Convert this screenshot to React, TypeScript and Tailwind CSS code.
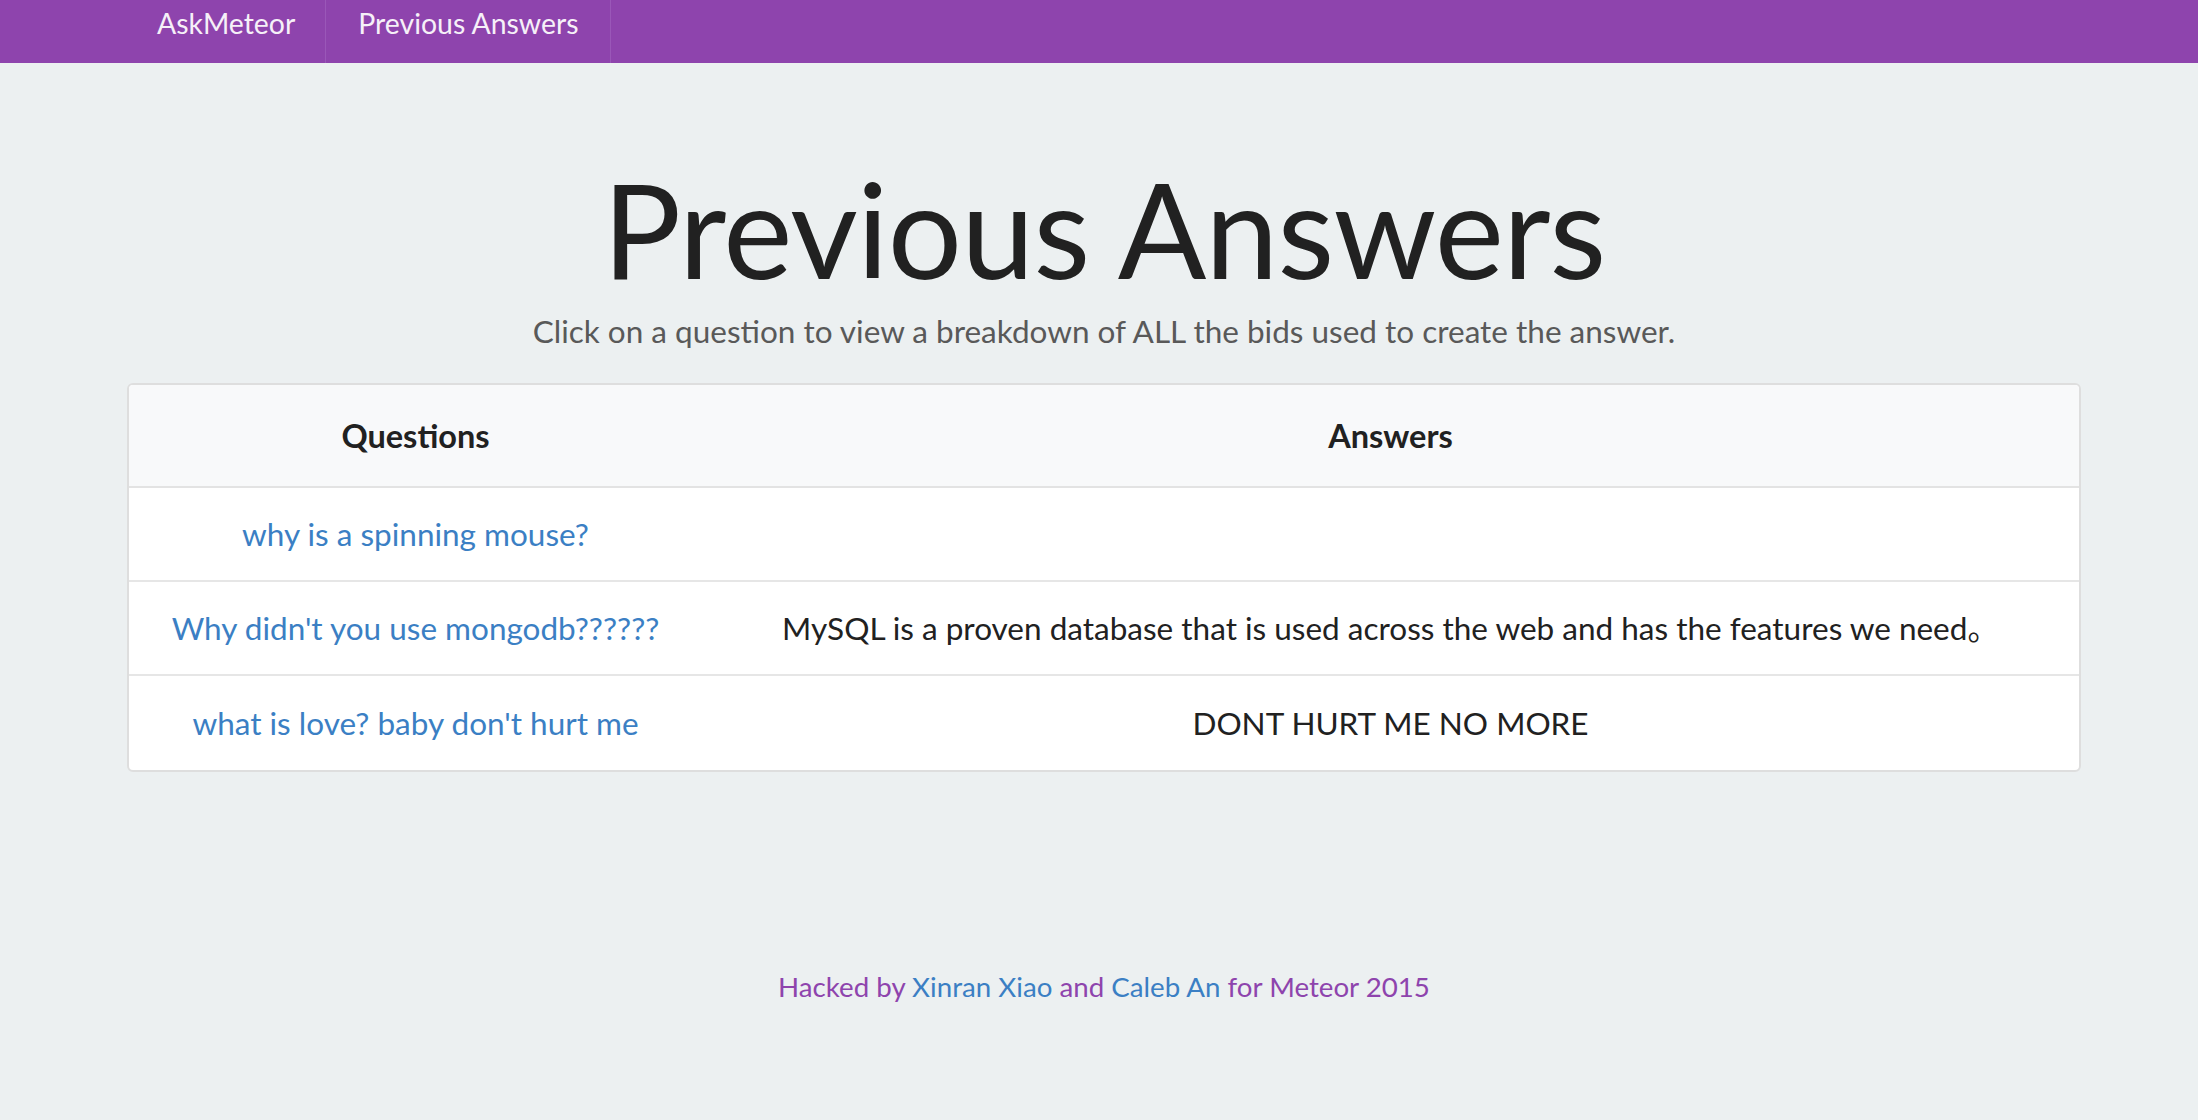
import React from "react";

const rows = [
  { q: "why is a spinning mouse?", a: "" },
  {
    q: "Why didn't you use mongodb??????",
    a: "MySQL is a proven database that is used across the web and has the features we need。",
  },
  { q: "what is love? baby don't hurt me", a: "DONT HURT ME NO MORE" },
];

export default function App() {
  return (
    <div className="min-h-screen w-full bg-[#ecf0f1] font-['Lato','Noto_Sans_CJK_SC',sans-serif] pb-[100px]">
      <nav className="h-[63px] bg-[#8e44ad] flex pl-[127px]">
        <a className="h-full px-[30px] border-r border-[#9a57b8] text-[28.4px] leading-[47px] text-[#f6f0f8]">
          AskMeteor
        </a>
        <a className="h-full px-[32px] border-r border-[#9a57b8] text-[28.4px] leading-[47px] text-[#f6f0f8]">
          Previous Answers
        </a>
      </nav>

      <main className="ml-[127px] w-[1954px]">
        <h1 className="mt-[100px] text-center text-[131px] leading-none tracking-[-0.8px] text-[#212121] font-normal">
          Previous Answers
        </h1>
        <p className="mt-[22px] text-center text-[31.5px] leading-none text-[#595959]">
          Click on a question to view a breakdown of ALL the bids used to create the answer.
        </p>

        <div className="mt-[35px] rounded-[6px] border-2 border-[#dedede] bg-white overflow-hidden">
          <div className="grid grid-cols-[573px_1fr] h-[103px] pt-[2px] items-center bg-[#f8f9fa] border-b-2 border-[#e3e3e3] text-[32.5px] font-bold text-[#212121]">
            <div className="text-center">Questions</div>
            <div className="text-center">Answers</div>
          </div>
          {rows.map((r, i) => (
            <div
              key={i}
              className={
                "grid grid-cols-[573px_1fr] h-[94px] pt-[3px] items-center text-[31.5px] " +
                (i < rows.length - 1 ? "border-b-2 border-[#e6e6e6]" : "")
              }
            >
              <div className="text-center text-[#3b7fc4]">{r.q}</div>
              <div className="text-center text-[#212121]">{r.a}</div>
            </div>
          ))}
        </div>

        <footer className="mt-[201px] text-center text-[27.7px] leading-none text-[#8e44ad]">
          Hacked by <a className="text-[#3b7fc4]">Xinran Xiao</a> and{" "}
          <a className="text-[#3b7fc4]">Caleb An</a> for Meteor 2015
        </footer>
      </main>
    </div>
  );
}
